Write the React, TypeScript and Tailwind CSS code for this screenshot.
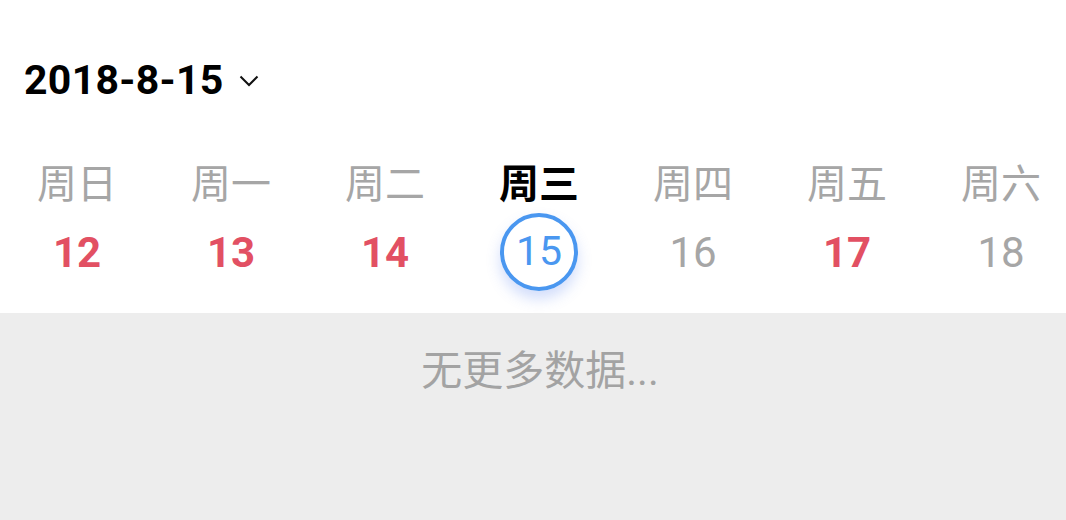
const days = [
  { label: "周日", num: 12, kind: "red" },
  { label: "周一", num: 13, kind: "red" },
  { label: "周二", num: 14, kind: "red" },
  { label: "周三", num: 15, kind: "active" },
  { label: "周四", num: 16, kind: "plain" },
  { label: "周五", num: 17, kind: "red" },
  { label: "周六", num: 18, kind: "plain" },
];

const cjk = "font-['Roboto','Noto_Sans_CJK_SC',sans-serif]";

const App = () => {
  return <div className={`w-[1066px] h-[520px] bg-white flex flex-col overflow-hidden ${cjk}`}>
      {/* Date picker */}
      <div className="h-[140px] flex items-center pl-[24px] pt-[20px] gap-[15px]">
        <span className="text-[41px] font-bold text-black tracking-[0.3px] leading-none">2018-8-15</span>
        <svg width="20" height="12" viewBox="0 0 20 12" fill="none" className="mt-[2px]">
          <path d="M1.5 1.5 L10 10 L18.5 1.5" stroke="#111" strokeWidth="2" />
        </svg>
      </div>

      {/* Week strip */}
      <div className="grid grid-cols-[repeat(7,154px)] h-[173px] pt-[21px]">
        {days.map(d => <div key={d.num} className="flex flex-col items-center">
            <span className={`text-[40px] leading-[48px] ${d.kind === "active" ? "font-bold text-black" : "text-[#a6a6a6]"}`}>
              {d.label}
            </span>
            <div className="mt-[4px] w-[78px] h-[78px] flex items-center justify-center">
              {d.kind === "active" ? <div className="w-[78px] h-[78px] rounded-full border-[4px] border-[#4a97f0] flex items-center justify-center text-[41px] text-[#4a97f0] shadow-[0_8px_14px_rgba(74,120,240,0.25)]">
                  {d.num}
                </div> : <span className={`text-[42px] ${d.kind === "red" ? "font-bold text-[#e25063]" : "text-[#a6a6a6]"}`}>
                  {d.num}
                </span>}
            </div>
          </div>)}
      </div>

      {/* Empty list */}
      <div className="flex-1 bg-[#ededed] flex justify-center pt-[28px] pl-[14px]">
        <span className="text-[41px] text-[#a3a3a3] leading-[60px]">无更多数据...</span>
      </div>
    </div>;
};

export default App;
